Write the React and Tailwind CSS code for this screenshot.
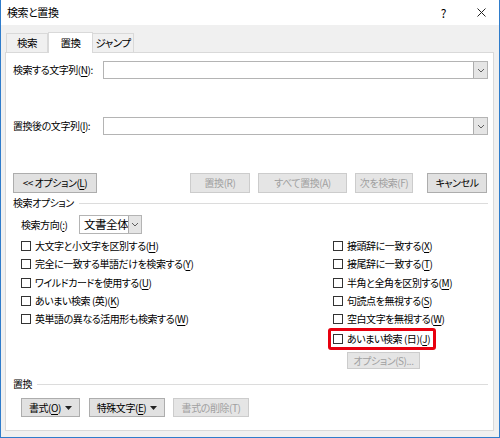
import React from 'react';

function U({ children }) {
  return <span className="underline underline-offset-[2px]">{children}</span>;
}

function Chevron() {
  return (
    <svg width="8" height="5" viewBox="0 0 8 5">
      <path d="M1 1l3 3 3-3" fill="none" stroke="#5f5f5f" strokeWidth="1" />
    </svg>
  );
}

function Caret() {
  return (
    <svg width="7" height="4" viewBox="0 0 7 4" className="ml-[4px]">
      <path d="M0 0h7L3.5 4z" fill="#222" />
    </svg>
  );
}

function Combo() {
  return (
    <div className="ml-auto flex h-[18px] w-[385px] border border-[#b4b4b4] bg-white">
      <div className="flex-1" />
      <div className="flex w-[14px] items-center justify-center border-l border-[#adadad] bg-[#e5e5e5]">
        <Chevron />
      </div>
    </div>
  );
}

function Btn({ disabled, className, children }) {
  const tone = disabled
    ? 'border-[#cccccc] bg-[#e5e5e5] text-[#a0a0a0]'
    : 'border-[#adadad] bg-[#e1e1e1] text-black';
  return (
    <div className={`flex shrink-0 items-center justify-center border ${tone} ${className}`}>
      {children}
    </div>
  );
}

function Check({ children, className = '' }) {
  return (
    <div className={`flex h-[18.25px] items-center ${className}`}>
      <span className="h-[10px] w-[10px] shrink-0 border border-[#333333] bg-white" />
      <span className="ml-[4px]">{children}</span>
    </div>
  );
}

function GroupHead({ children }) {
  return (
    <div className="flex h-[14px] items-center">
      <span>{children}</span>
      <div className="ml-[5px] h-px flex-1 bg-[#dcdcdc]" />
    </div>
  );
}

export default function App() {
  return (
    <div className="flex h-[438px] w-[500px] flex-col whitespace-nowrap border-x border-b border-[#2f7ccb] font-['Noto_Sans_CJK_JP',sans-serif] text-[10px] leading-none tracking-[-0.45px] text-black [font-feature-settings:'palt']">
      {/* title bar */}
      <div className="flex h-[25px] shrink-0 items-center bg-white pl-[6px]">
        <span className="text-[11px]">検索と置換</span>
        <span className="ml-auto text-[12px]">?</span>
        <svg width="9" height="9" viewBox="0 0 9 9" className="ml-[31px] mr-[13px]">
          <path d="M0.5 0.5l8 8M8.5 0.5l-8 8" stroke="#222" strokeWidth="1" />
        </svg>
      </div>

      <div className="flex-1 bg-[#f0f0f0] pl-[4px] pr-[5px]">
        {/* tabs */}
        <div className="mt-[7px] flex h-[20px] items-end pl-px text-[10.5px]">
          <div className="flex h-[19px] w-[42px] items-center justify-center border-x border-t border-[#d9d9d9]">検索</div>
          <div className="relative z-10 -mb-px flex h-[21px] w-[45px] items-center justify-center border-x border-t border-[#d9d9d9] bg-white">置換</div>
          <div className="flex h-[19px] w-[41px] items-center justify-center border-r border-t border-[#d9d9d9]">ジャンプ</div>
        </div>

        {/* panel */}
        <div className="flex h-[379px] flex-col border border-[#d9d9d9] bg-white pl-[7px] pr-[5px]">
          <div className="mt-[8px] flex h-[18px] items-center">
            <span>検索する文字列(<U>N</U>):</span>
            <Combo />
          </div>
          <div className="mt-[38px] flex h-[18px] items-center">
            <span>置換後の文字列(<U>I</U>):</span>
            <Combo />
          </div>

          <div className="mt-[38px] flex h-[20px]">
            <Btn className="h-[20px] w-[84px]">&lt;&lt; オプション(<U>L</U>)</Btn>
            <Btn disabled className="ml-[93px] h-[20px] w-[60px]">置換(R)</Btn>
            <Btn disabled className="ml-[8px] h-[20px] w-[89px]">すべて置換(A)</Btn>
            <Btn disabled className="ml-[8px] h-[20px] w-[58px]">次を検索(F)</Btn>
            <Btn className="ml-[14px] h-[20px] w-[60px]">キャンセル</Btn>
          </div>

          <div className="mt-[3px]">
            <GroupHead>検索オプション</GroupHead>
          </div>

          <div className="mt-[5px] flex h-[19px] items-center pl-[8px]">
            <span className="w-[58px]">検索方向(<U>:</U>)</span>
            <div className="flex h-[19px] w-[63px] border border-[#b4b4b4] bg-white">
              <span className="flex flex-1 items-center pl-[4px] text-[11.5px]">文書全体</span>
              <div className="flex w-[14px] items-center justify-center border-l border-[#adadad] bg-[#e5e5e5]">
                <Chevron />
              </div>
            </div>
          </div>

          <div className="mt-[3px] flex">
            <div className="ml-[8px] w-[307px]">
              <Check>大文字と小文字を区別する(<U>H</U>)</Check>
              <Check>完全に一致する単語だけを検索する(<U>Y</U>)</Check>
              <Check>ワイルドカードを使用する(<U>U</U>)</Check>
              <Check>あいまい検索 (英)(<U>K</U>)</Check>
              <Check>英単語の異なる活用形も検索する(<U>W</U>)</Check>
            </div>
            <div className="flex flex-col">
              <Check className="pl-[5px]">接頭辞に一致する(<U>X</U>)</Check>
              <Check className="pl-[5px]">接尾辞に一致する(<U>T</U>)</Check>
              <Check className="pl-[5px]">半角と全角を区別する(<U>M</U>)</Check>
              <Check className="pl-[5px]">句読点を無視する(<U>S</U>)</Check>
              <Check className="pl-[5px]">空白文字を無視する(<U>W</U>)</Check>
              <div className="flex h-[22px] w-[108px] items-center rounded-[3px] border-[3px] border-[#e8000f] pl-[2px]">
                <span className="h-[10px] w-[10px] shrink-0 border border-[#333333] bg-white" />
                <span className="ml-[4px]">あいまい検索 (日)(<U>J</U>)</span>
              </div>
              <Btn disabled className="ml-[19px] mt-[2px] h-[17px] w-[73px]">オプション(S)...</Btn>
            </div>
          </div>

          <div className="mt-[8px]">
            <GroupHead>置換</GroupHead>
          </div>

          <div className="mt-[7px] flex h-[19px] pl-[8px]">
            <Btn className="h-[19px] w-[59px]">書式(<U>O</U>)<Caret /></Btn>
            <Btn className="ml-[9px] h-[19px] w-[76px]">特殊文字(<U>E</U>)<Caret /></Btn>
            <Btn disabled className="ml-[8px] h-[19px] w-[76px]">書式の削除(T)</Btn>
          </div>
        </div>
      </div>
    </div>
  );
}
